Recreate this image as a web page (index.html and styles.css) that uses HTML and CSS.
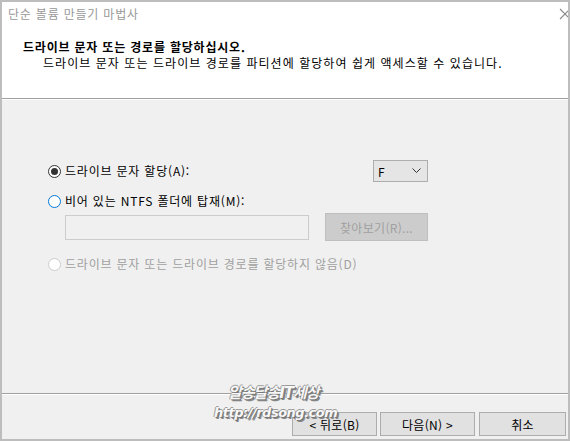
FILE: index.html
```html
<!DOCTYPE html>
<html lang="ko">
<head>
<meta charset="utf-8">
<link rel="stylesheet" href="styles.css">
</head>
<body>
<div class="window">
  <div class="titlebar">
    <span class="title">단순 볼륨 만들기 마법사</span>
    <span class="close"><svg width="12" height="12" viewBox="0 0 12 12"><path d="M1 1 L11 11 M11 1 L1 11" stroke="#8a8a8a" stroke-width="1.1" fill="none"/></svg></span>
  </div>
  <div class="header">
    <div class="h-title">드라이브 문자 또는 경로를 할당하십시오.</div>
    <div class="h-sub">드라이브 문자 또는 드라이브 경로를 파티션에 할당하여 쉽게 액세스할 수 있습니다.</div>
  </div>
  <div class="sep"></div>
  <div class="content">
    <div class="row row1">
      <span class="radio checked"></span>
      <span class="label">드라이브 문자 할당(A):</span>
      <span class="select"><span>F</span><svg width="9" height="6" viewBox="0 0 9 6"><path d="M0.5 0.5 L4.5 4.5 L8.5 0.5" stroke="#333" stroke-width="1" fill="none"/></svg></span>
    </div>
    <div class="row row2">
      <span class="radio focus"></span>
      <span class="label">비어 있는 NTFS 폴더에 탑재(M):</span>
    </div>
    <div class="row row3">
      <span class="textbox"></span>
      <span class="btn disabled browse">찾아보기(R)...</span>
    </div>
    <div class="row row4">
      <span class="radio disabled-radio"></span>
      <span class="label dim">드라이브 문자 또는 드라이브 경로를 할당하지 않음(D)</span>
    </div>
  </div>
  <div class="sep"></div>
  <div class="footer">
    <span class="btn back">&lt; 뒤로(B)</span>
    <span class="btn next">다음(N) &gt;</span>
    <span class="btn cancel">취소</span>
    <div class="watermark">
      <div class="wm1">알송달송IT세상</div>
      <div class="wm2">http://rdsong.com</div>
    </div>
  </div>
</div>
</body>
</html>
```
FILE: styles.css
```css
* { box-sizing: border-box; }
html, body { margin: 0; padding: 0; }
body {
  width: 570px;
  height: 441px;
  overflow: hidden;
  font-family: "Noto Sans CJK KR", "Noto Sans", sans-serif;
  font-size: 12px;
  letter-spacing: 0.8px;
  color: #000;
}
.window {
  width: 570px;
  height: 441px;
  border: 2px solid #bdbdbd;
  display: flex;
  flex-direction: column;
  background: #f0f0f0;
  overflow: hidden;
}
.titlebar {
  height: 28px;
  background: #fff;
  display: flex;
  align-items: center;
  justify-content: space-between;
  padding-left: 6px;
}
.title {
  color: #999;
  font-size: 12px;
  line-height: 16px;
  margin-top: -4px;
}
.close {
  width: 14px;
  height: 14px;
  margin-right: -4px;
  margin-top: -4px;
  display: flex;
  align-items: center;
  justify-content: center;
}
.header {
  height: 68px;
  background: #fff;
  padding: 9px 0 0 21px;
}
.h-title {
  font-weight: bold;
  line-height: 16px;
}
.h-sub {
  line-height: 16px;
  padding-left: 20px;
  letter-spacing: 1.05px;
}
.sep {
  height: 2px;
  border-top: 1px solid #a0a0a0;
  border-bottom: 1px solid #fff;
}
.content {
  flex: 1;
  padding: 60px 140px 0 46px;
}
.row {
  display: flex;
  align-items: center;
}
.row1 { height: 22px; }
.row2 { height: 16px; margin-top: 11px; }
.row3 { height: 28px; margin-top: 4px; padding-left: 17px; gap: 16px; }
.row4 { height: 16px; margin-top: 15px; }
.radio {
  width: 13px;
  height: 13px;
  border-radius: 50%;
  border: 1px solid #333;
  background: #fff;
  flex: none;
  margin-right: 4px;
  position: relative;
}
.radio.checked::after {
  content: "";
  position: absolute;
  left: 2px;
  top: 2px;
  width: 7px;
  height: 7px;
  border-radius: 50%;
  background: #333;
}
.radio.focus { border-color: #0078d7; }
.radio.disabled-radio { border-color: #cccccc; background: #fff; }
.label { line-height: 16px; white-space: nowrap; }
.dim { color: #a0a0a0; }
.select {
  margin-left: auto;
  width: 55px;
  height: 22px;
  border: 1px solid #adadad;
  background: #e5e5e5;
  display: flex;
  align-items: center;
  justify-content: space-between;
  padding: 0 6px 0 4px;
}
.textbox {
  flex: 1;
  height: 25px;
  margin-top: 1px;
  border: 1px solid #ccc;
  background: #f0f0f0;
}
.btn {
  display: flex;
  align-items: center;
  justify-content: center;
  border: 1px solid #adadad;
  background: #e1e1e1;
  height: 24px;
  white-space: nowrap;
  letter-spacing: 0.3px;
}
.btn.disabled {
  background: #cccccc;
  border-color: #bfbfbf;
  color: #a0a0a0;
}
.browse { width: 103px; height: 28px; }
.footer {
  height: 44px;
  display: flex;
  justify-content: flex-end;
  align-items: flex-start;
  padding: 17px 2px 0 0;
  position: relative;
}
.back { width: 85px; }
.next { width: 95px; margin-left: 3px; }
.cancel { width: 87px; margin-left: 4px; }
.watermark {
  position: absolute;
  left: 212px;
  top: -12px;
  font-family: "DejaVu Sans", "Noto Sans CJK KR", sans-serif;
  font-weight: bold;
  font-style: italic;
  color: #f7f7f7;
  letter-spacing: 0;
  text-shadow: 1px 1px 0 #777, 2px 2px 0 #888, -1px 0 0 #999, 0 -1px 0 #999;
  pointer-events: none;
}
.wm1 { font-size: 15px; line-height: 20px; padding-left: 14px; letter-spacing: -1px; }
.wm2 { font-size: 13px; line-height: 16px; margin-top: 2px; letter-spacing: -0.5px; }
```
